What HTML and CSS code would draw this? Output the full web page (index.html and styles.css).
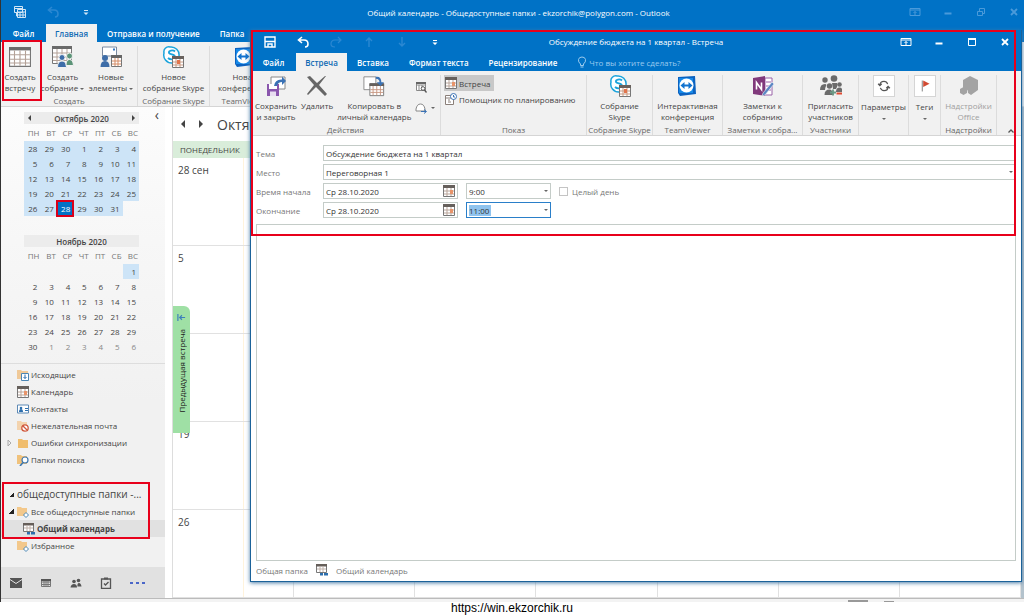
FILE: index.html
```html
<!DOCTYPE html>
<html lang="ru">
<head>
<meta charset="utf-8">
<title>Общий календарь - Outlook</title>
<link rel="stylesheet" href="styles.css">
</head>
<body>
<svg class="sprite" aria-hidden="true">
  <symbol id="i-cal" viewBox="0 0 20 18"><path d="M.5.5h19v17H.5z" fill="#fff" stroke="#777"/><path d="M0 0h20v3H0z" fill="#6a6a6a"/><path d="M1 7h18M1 11h18M1 14.500h18M5 3v14M10 3v14M15 3v14" stroke="#b3a197" fill="none"/></symbol>
  <symbol id="i-minical" viewBox="0 0 12 12"><path d="M.5.5h11v11H.5z" fill="#fff" stroke="#777"/><path d="M0 0h12v3H0z" fill="#66605c"/><path d="M1 6h10M1 9h10M4 3v8M8 3v8" stroke="#b9a59a" fill="none"/><path d="M7 5h3v4H7z" fill="#e8946a"/></symbol>
  <symbol id="i-meet" viewBox="0 0 22 22"><use href="#i-cal" width="20" height="18"/><g stroke="#f1f1f1"><circle cx="10" cy="11.500" r="3" fill="#3e6da8"/><path d="M5.500 21.500q0-6.500 4.500-6.500t4.500 6.500z" fill="#3e6da8"/><circle cx="17.500" cy="10" r="3" fill="#5c9478"/><path d="M14 19.500q0-6 3.500-6t4 6z" fill="#5c9478"/></g></symbol>
  <symbol id="i-items" viewBox="0 0 22 22"><path d="M2.500 1h14v9h-14z" fill="#fff" stroke="#7a8aa0"/><path d="M13 2.500h2v2h-2z" fill="#3579c4"/><circle cx="5" cy="12" r="3" fill="#3e6da8"/><path d="M.5 21q0-6 4.500-6t4.500 6z" fill="#3e6da8"/><path d="M11.500 9.500h10v11h-10z" fill="#fff" stroke="#777"/><path d="M11 9h11v3H11z" fill="#666"/><path d="M12 15h9M12 18h9M15 12v8M18 12v8" stroke="#d58b65"/></symbol>
  <symbol id="i-skype" viewBox="0 0 22 22"><path d="M2 7a5 5 0 0 1 6-6 8 8 0 0 1 9 9 5 5 0 0 1-7 7A8 8 0 0 1 2 7z" fill="#fff" stroke="#1ba4dc" stroke-width="1.500"/><path d="M13 5.500c-2-2-7-1-6 1.500 1 2 6 1 6 4s-5 3-7 1" fill="none" stroke="#1ba4dc" stroke-width="1.800"/><path d="M10.500 10.500h11v11h-11z" fill="#fff" stroke="#777"/><path d="M10 10h12v3H10z" fill="#68615d"/><path d="M11 16h10M11 19h10M14 13v8M18 13v8" stroke="#c99b84"/><path d="M15 14h3v4h-3z" fill="#e2754c"/></symbol>
  <symbol id="i-tv" viewBox="0 0 20 22"><path d="M1 2l17-1 1 18-16 2-2-3z" fill="#0b62c0"/><path d="M2 3h14v15H2z" fill="#1689e8"/><circle cx="9.500" cy="10.500" r="7" fill="#fff"/><path d="M3.500 10.500L7.500 7v2.500h4V7l4 3.500-4 3.500v-2.500h-4V14z" fill="#1273cf"/></symbol>
  <symbol id="i-save" viewBox="0 0 12 12"><path d="M1 1h10v10H1z" fill="none" stroke="currentColor" stroke-width="1.400"/><path d="M1 5.500h10M4 11V8h4v3" fill="none" stroke="currentColor" stroke-width="1.400"/></symbol>
  <symbol id="i-undo" viewBox="0 0 12 12"><path d="M5 1L1.500 4 5 7M2 4h5q4 0 4 4 0 3-3 3" fill="none" stroke="currentColor" stroke-width="1.600"/></symbol>
  <symbol id="i-redo" viewBox="0 0 12 12"><path d="M8 1l3 3-3 3M11 4H5q-4 0-4 4 0 3 4 3" fill="none" stroke="currentColor" stroke-width="1.200"/></symbol>
  <symbol id="i-up" viewBox="0 0 12 12"><path d="M6 11V2M3 5l3-3 3 3" fill="none" stroke="currentColor" stroke-width="1.400"/></symbol>
  <symbol id="i-down" viewBox="0 0 12 12"><path d="M6 1v9M3 7l3 3 3-3" fill="none" stroke="currentColor" stroke-width="1.400"/></symbol>
  <symbol id="i-more" viewBox="0 0 12 12"><path d="M4 4h4v1H4zM3.500 6.500h5L6 9z" fill="currentColor"/></symbol>
  <symbol id="i-outlook" viewBox="0 0 12 12"><path d="M.5.5h8v6h-8zM3.500 3.500h8v8h-8zM.5 2.500h8M3.500 6h8M6 6v5M9 6v5M4 9h7M2.500 7v3h1" fill="none" stroke="currentColor"/></symbol>
  <symbol id="i-ribbon" viewBox="0 0 12 12"><path d="M1 2.500h10v7H1zM1 4h10M6 9V5.500M4.500 7L6 5.500 7.500 7" fill="none" stroke="currentColor"/></symbol>
  <symbol id="i-min" viewBox="0 0 12 12"><path d="M2.500 7.500h7" stroke="currentColor" stroke-width="2"/></symbol>
  <symbol id="i-max" viewBox="0 0 12 12"><path d="M2.500 3v6.500h7V3z" fill="none" stroke="currentColor"/><path d="M2 2h8v2H2z" fill="currentColor"/></symbol>
  <symbol id="i-rest" viewBox="0 0 12 12"><path d="M2.500 5.500h5v4h-5zM4.500 5V2.500h5v5H8" fill="none" stroke="currentColor"/></symbol>
  <symbol id="i-x" viewBox="0 0 12 12"><path d="M3 3l6 6M9 3l-6 6" stroke="currentColor" stroke-width="1.800"/></symbol>
  <symbol id="i-folder" viewBox="0 0 12 12"><path d="M1 2h4l1 1h5v8H1z" fill="#f0bd6c"/></symbol>
  <symbol id="i-shared" viewBox="0 0 12 12"><path d="M0 1h4l1 1h5v8H0z" fill="#f3c88b"/><path d="M9 6.500L11.500 9 9 11.500 6.500 9z" fill="#fff" stroke="#4b86b4"/></symbol>
  <symbol id="i-shcal" viewBox="0 0 12 12"><path d="M.5.500h10v8H.5z" fill="#fff" stroke="#777"/><path d="M0 0h11v2.500H0z" fill="#665f5a"/><path d="M1 5h9M4 2v6M7 2v6" stroke="#c0b2aa"/><path d="M4 9h3v2.500H4zM8 9h4v2.500H8z" fill="#2c6fae"/></symbol>
  <symbol id="i-people" viewBox="0 0 12 12"><circle cx="4" cy="4.500" r="1.800" fill="currentColor"/><circle cx="8.500" cy="3.500" r="1.800" fill="currentColor"/><path d="M.5 10.500Q1 7 4 7t3 3.500zM7.500 9.500Q7 6 9 6t2.500 3.500z" fill="currentColor"/></symbol>
</svg>

<main class="app">
  <header class="bar">
    <div class="title">
      <div class="quick dim">
        <button aria-label="Outlook" class="lit"><svg><use href="#i-outlook"/></svg></button>
        <button aria-label="Отменить" class="faint"><svg><use href="#i-undo"/></svg></button>
        <button aria-label="Ещё" class="lit"><svg><use href="#i-more"/></svg></button>
      </div>
      <h1>Общий календарь - Общедоступные папки - ekzorchik@polygon.com - Outlook</h1>
      <div class="winbtns dim">
        <button aria-label="Лента"><svg><use href="#i-ribbon"/></svg></button>
        <button aria-label="Свернуть"><svg><use href="#i-min"/></svg></button>
        <button aria-label="Восстановить"><svg><use href="#i-rest"/></svg></button>
        <button aria-label="Закрыть"><svg><use href="#i-x"/></svg></button>
      </div>
    </div>
    <nav class="tabs"><button>Файл</button><button class="on">Главная</button><button>Отправка и получение</button><button>Папка</button></nav>
  </header>

  <section class="ribbon main-ribbon">
    <div class="group g-create">
      <div class="btns">
        <button class="big"><svg class="ic"><use href="#i-cal"/></svg>Создать<br>встречу</button>
        <button class="big"><svg class="ic"><use href="#i-meet"/></svg>Создать<br>собрание <i class="dd"></i></button>
        <button class="big"><svg class="ic"><use href="#i-items"/></svg>Новые<br>элементы <i class="dd"></i></button>
      </div>
      <p>Создать</p>
    </div>
    <div class="group g-skype"><div class="btns"><button class="big"><svg class="ic"><use href="#i-skype"/></svg>Новое<br>собрание Skype</button></div><p>Собрание Skype</p></div>
    <div class="group g-tv"><div class="btns"><button class="big"><svg class="ic"><use href="#i-tv"/></svg>Новая<br>конференция</button></div><p>TeamViewer</p></div>
  </section>

  <div class="work">
    <aside class="side">
      <button class="fold" aria-label="Свернуть панель">‹</button>
      <section class="cals">
        <table class="mini">
          <caption><span class="capt"><i class="tri l"></i>Октябрь 2020<i class="tri r"></i></span></caption>
          <thead><tr><th>ПН<th>ВТ<th>СР<th>ЧТ<th>ПТ<th>СБ<th>ВС</tr></thead>
          <tbody class="sel">
          <tr><td>28<td>29<td>30<td>1<td>2<td>3<td>4</tr>
          <tr><td>5<td>6<td>7<td>8<td>9<td>10<td>11</tr>
          <tr><td>12<td>13<td>14<td>15<td>16<td>17<td>18</tr>
          <tr><td>19<td>20<td>21<td>22<td>23<td>24<td>25</tr>
          <tr><td>26<td>27<td class="today">28<td>29<td>30<td>31<td class="none"></tr>
          </tbody>
        </table>
        <table class="mini">
          <caption><span class="capt mid">Ноябрь 2020</span></caption>
          <thead><tr><th>ПН<th>ВТ<th>СР<th>ЧТ<th>ПТ<th>СБ<th>ВС</tr></thead>
          <tbody>
          <tr><td><td><td><td><td><td><td class="hit">1</tr>
          <tr><td>2<td>3<td>4<td>5<td>6<td>7<td>8</tr>
          <tr><td>9<td>10<td>11<td>12<td>13<td>14<td>15</tr>
          <tr><td>16<td>17<td>18<td>19<td>20<td>21<td>22</tr>
          <tr><td>23<td>24<td>25<td>26<td>27<td>28<td>29</tr>
          <tr><td>30<td class="out">1<td class="out">2<td class="out">3<td class="out">4<td class="out">5<td class="out">6</tr>
          </tbody>
        </table>
      </section>
      <nav class="folders">
        <a href="#"><i class="tw"></i><svg viewBox="0 0 12 12"><path d="M0 1h4l1 1h6v8H0z" fill="#f0c998"/><path d="M4.500 4.500h7v7h-7z" fill="#fff" stroke="#4b86b4"/><path d="M8 5.500v4M6.500 8L8 9.500 9.500 8" stroke="#2c6fae" fill="none"/></svg>Исходящие</a>
        <a href="#"><i class="tw"></i><svg><use href="#i-minical"/></svg>Календарь</a>
        <a href="#"><i class="tw"></i><svg viewBox="0 0 12 12"><path d="M.5 2h11v8H.5z" fill="#fff" stroke="#5c89b5"/><circle cx="4" cy="5" r="1.300" fill="#2c6fae"/><path d="M2 9q0-3 2-3t2 3zM8 5h3v1H8zM8 7h3v1H8z" fill="#2c6fae"/></svg>Контакты</a>
        <a href="#"><i class="tw"></i><svg viewBox="0 0 12 12"><path d="M0 1h4l1 1h5v8H0z" fill="#f3d3ae"/><circle cx="8" cy="8" r="3.200" fill="#fff" stroke="#d0583c" stroke-width="1.300"/><path d="M6 6l4 4" stroke="#d0583c" stroke-width="1.300"/></svg>Нежелательная почта</a>
        <a href="#"><i class="tw"><svg viewBox="0 0 6 8"><path d="M1 1l3 3-3 3z" fill="none" stroke="#aaa"/></svg></i><svg><use href="#i-folder"/></svg>Ошибки синхронизации</a>
        <a href="#"><i class="tw"></i><svg viewBox="0 0 12 12"><path d="M0 1h4l1 1h5v8H0z" fill="#f0c27c"/><circle cx="8" cy="6" r="3" fill="#fff" stroke="#3d77b0" stroke-width="1.200"/><path d="M6 8.500L3 12" stroke="#3d77b0" stroke-width="1.600"/></svg>Папки поиска</a>
      </nav>
      <nav class="folders shared">
        <a href="#" class="root"><i class="tw open"></i>общедоступные папки -...</a>
        <a href="#"><i class="tw open"></i><svg><use href="#i-shared"/></svg>Все общедоступные папки</a>
        <a href="#" class="cur"><i class="tw"></i><svg><use href="#i-shcal"/></svg>Общий календарь</a>
        <a href="#"><i class="tw"></i><svg><use href="#i-shared"/></svg>Избранное</a>
      </nav>
      <nav class="modules">
        <button aria-label="Почта"><svg viewBox="0 0 12 12"><path d="M0 1h12v10H0z" fill="#555"/><path d="M0 2.500l6 4 6-4" fill="none" stroke="#e1e1e1"/></svg></button>
        <button aria-label="Календарь"><svg viewBox="0 0 12 12"><path d="M1.500 2.500h9v7h-9zM1 5h10M1 7.500h10M4 3v7M6 3v7M8 3v7" fill="none" stroke="#777"/><path d="M1 2h10v2H1z" fill="#555"/></svg></button>
        <button aria-label="Люди"><svg><use href="#i-people"/></svg></button>
        <button aria-label="Задачи"><svg viewBox="0 0 12 12"><path d="M1.500 2h9v9.500h-9z" fill="none" stroke="#555" stroke-width="1.300"/><path d="M4 .5h4v2H4z" fill="#555"/><path d="M4 6.500L5.500 8 8.500 5" fill="none" stroke="#555" stroke-width="1.400"/></svg></button>
        <button aria-label="Ещё" class="dots"><svg viewBox="0 0 16 12"><path d="M0 5h3v2H0zM6 5h3v2H6zM12 5h3v2h-3z" fill="#4a66c8"/></svg></button>
      </nav>
    </aside>

    <section class="month">
      <div class="mhead"><i class="tri l"></i><i class="tri r"></i><h2>Октябрь 2020</h2></div>
      <div class="dayhead">ПОНЕДЕЛЬНИК</div>
      <div class="grid">
        <div class="wk"><div>28 сен</div><div></div><div></div><div></div><div></div><div></div><div></div></div>
        <div class="wk"><div>5</div><div></div><div></div><div></div><div></div><div></div><div></div></div>
        <div class="wk"><div></div><div></div><div></div><div></div><div></div><div></div><div></div></div>
        <div class="wk"><div>19</div><div></div><div></div><div></div><div></div><div></div><div></div></div>
        <div class="wk"><div>26</div><div></div><div></div><div></div><div></div><div></div><div></div></div>
      </div>
      <button class="prev"><svg viewBox="0 0 10 10"><path d="M1 1v8M9 5H3M5.500 2.500L3 5l2.500 2.500" fill="none" stroke="#3d7fbb" stroke-width="1.300"/></svg><span>Предыдущая встреча</span></button>
    </section>
  </div>
  <div class="status"><i class="seg"></i><i class="seg dash"></i></div>

  <div class="mark m-create"></div>
  <div class="mark m-folders"></div>
</main>

<section class="dialog" role="dialog" aria-label="Встреча">
  <header class="bar">
    <div class="title">
      <div class="quick">
        <button aria-label="Сохранить"><svg><use href="#i-save"/></svg></button>
        <button aria-label="Отменить"><svg><use href="#i-undo"/></svg></button>
        <button aria-label="Повторить" class="faint"><svg><use href="#i-redo"/></svg></button>
        <button aria-label="Назад" class="faint"><svg><use href="#i-up"/></svg></button>
        <button aria-label="Вперёд" class="faint"><svg><use href="#i-down"/></svg></button>
        <button aria-label="Ещё"><svg><use href="#i-more"/></svg></button>
      </div>
      <h1>Обсуждение бюджета на 1 квартал - Встреча</h1>
      <div class="winbtns">
        <button aria-label="Лента"><svg><use href="#i-ribbon"/></svg></button>
        <button aria-label="Свернуть"><svg><use href="#i-min"/></svg></button>
        <button aria-label="Развернуть"><svg><use href="#i-max"/></svg></button>
        <button aria-label="Закрыть"><svg><use href="#i-x"/></svg></button>
      </div>
    </div>
    <nav class="tabs"><button>Файл</button><button class="on">Встреча</button><button>Вставка</button><button>Формат текста</button><button>Рецензирование</button><button class="tell"><svg viewBox="0 0 10 12"><path d="M3.500 8Q1 6 1.500 3.500 2 1 5 1t3.500 2.500Q9 6 6.500 8v1.500h-3zM3.500 11h3" fill="none" stroke="currentColor"/></svg>Что вы хотите сделать?</button></nav>
  </header>

  <section class="ribbon">
    <div class="group g-act">
      <div class="btns">
        <button class="big"><svg class="ic" viewBox="0 0 22 22"><path d="M6 2h14v12H6z" fill="#fff" stroke="#888"/><path d="M2 9h12v12H2z" fill="#8a56ad"/><path d="M4 9h8v5H4z" fill="#fff"/><path d="M5 16.500h6V21H5z" fill="#e8ddf0"/><path d="M9 11q1-7 8-6.500V1.500L21 6l-4 4V7q-4 0-5 4z" fill="#3a72b5"/></svg>Сохранить<br>и закрыть</button>
        <button class="big"><svg class="ic" viewBox="0 0 22 22"><path d="M1 2l3-1 7 7 8-7h1l-7 9 8 9-2 2-9-9-8 8-1-1 7-9z" fill="#666"/></svg>Удалить</button>
        <button class="big"><svg class="ic" viewBox="0 0 24 22"><path d="M1 1h13v14H1z" fill="#fff" stroke="#888"/><path d="M7.500 8.500h15v13h-15z" fill="#fff" stroke="#777"/><path d="M7 8h16v3H7z" fill="#66605c"/><path d="M8 15h14M8 18h14M11 11v10M15 11v10M19 11v10" stroke="#c79680"/><path d="M14 1q6-1 6 6h3l-4 4-4-4h3q0-4-4-4z" fill="#3a72b5"/></svg>Копировать в<br>личный календарь</button>
        <div class="smalls">
          <button aria-label="Просмотр"><svg viewBox="0 0 12 12"><path d="M1.500 1.500h9v8h-9zM1 4h10M4 4v5M7 4v5" fill="#fff" stroke="#888"/><path d="M1 1h10v2H1z" fill="#666"/><circle cx="8" cy="7.500" r="1.800" fill="#fff" stroke="#555"/><path d="M9.500 9l2 2.500" stroke="#555" stroke-width="1.300"/></svg></button>
          <button aria-label="Переслать"><svg viewBox="0 0 12 12"><path d="M1 7Q2 2 5.500 2T10 7v2H1z" fill="#fff" stroke="#888"/><path d="M6 9.500h5M9 7.500l2.500 2L9 11.500" fill="none" stroke="#3a72b5"/></svg><i class="dd"></i></button>
        </div>
      </div><p>Действия</p>
    </div>
    <div class="group g-show"><div class="rows">
      <button class="row pressed"><svg viewBox="0 0 12 12"><use href="#i-minical"/></svg>Встреча</button>
      <button class="row"><svg viewBox="0 0 12 12"><path d="M.5 2.500h8v9h-8zM1 5h7M3 7h2M3 9h3" fill="#fff" stroke="#8a7f79"/><circle cx="8.500" cy="3.500" r="3" fill="#fff" stroke="#3a72b5"/><path d="M8.500 2v2h1.500" fill="none" stroke="#3a72b5"/></svg>Помощник по планированию</button>
    </div><p>Показ</p></div>
    <div class="group g66"><div class="btns"><button class="big"><svg class="ic"><use href="#i-skype"/></svg>Собрание<br>Skype</button></div><p>Собрание Skype</p></div>
    <div class="group g70"><div class="btns"><button class="big"><svg class="ic"><use href="#i-tv"/></svg>Интерактивная<br>конференция</button></div><p>TeamViewer</p></div>
    <div class="group g80"><div class="btns"><button class="big"><svg class="ic" viewBox="0 0 22 22"><path d="M13 3h7v17h-7z" fill="#fff" stroke="#9a62a8"/><path d="M14 7h5M14 11h5M14 15h5" stroke="#9a62a8"/><path d="M1 3l12-2v20L1 19z" fill="#80397b"/><path d="M4.500 14.500v-7l5 7v-7" fill="none" stroke="#fff" stroke-width="1.600"/><path d="M20 7l2 2-9 11-3 1 1-3z" fill="#5a86c4" stroke="#f1f1f1" stroke-width=".6"/></svg>Заметки к<br>собранию</button></div><p>Заметки к собра...</p></div>
    <div class="group g56"><div class="btns"><button class="big"><svg class="ic" viewBox="0 0 22 22"><g fill="#6b6b6b"><circle cx="5" cy="5" r="2.700"/><circle cx="14" cy="3.500" r="3.300"/><circle cx="19.500" cy="9.500" r="2.300"/><circle cx="9.500" cy="11" r="2.700"/><path d="M0 15q0-6 5-6 2 0 1 2-1 2-1 4zM12 8h5q1 3-1 6h-3zM4.500 20q0-5.500 5-5.500 3 0 4 5.500zM16 17q0-4.500 3.500-4.500t2.500 4.500z"/></g><path d="M13 14.500v6M10 17.500h6" stroke="#6b9a86" stroke-width="1.800"/><path d="M16.500 18.500H22" stroke="#e04a31" stroke-width="2"/></svg>Пригласить<br>участников</button></div><p>Участники</p></div>
    <div class="group g56 g-par"><div class="btns"><button class="big"><svg class="ic box" viewBox="0 0 22 22"><path d="M6.500 10q0-4 4.500-4 3 0 4 3M15.500 12q0 4-4.500 4-3 0-4-3M4.500 8.500l2 2 2-2M13.500 13.500l2-2 2 2" fill="none" stroke="#555" stroke-width="1.300"/></svg>Параметры<br><i class="dd"></i></button></div></div>
    <div class="group g-tag"><div class="btns"><button class="big"><svg class="ic box" viewBox="0 0 22 22"><path d="M8 5v12" stroke="#777"/><path d="M9 5l7 3.500L9 12z" fill="#d14a32"/></svg>Теги<br><i class="dd"></i></button></div></div>
    <div class="group g56 off"><div class="btns"><button class="big" disabled><svg class="ic" viewBox="0 0 22 22"><path d="M5 5l7-4 8 4v10l-7 5-3-2q0-5-5-5zM2 14l3.500-2L9 14v4l-3.500 2L2 18z" fill="#a3a3a3"/></svg>Надстройки<br>Office</button></div><p>Надстройки</p></div>
    <button class="collapse" aria-label="Свернуть ленту"><svg viewBox="0 0 8 8"><path d="M1.500 5.500L4 3l2.500 2.500" fill="none" stroke="#555" stroke-width="1.300"/></svg></button>
  </section>

  <form class="form">
    <label for="subj">Тема</label><input id="subj" class="subj" value="Обсуждение бюджета на 1 квартал">
    <label for="place">Место</label><span class="field"><input id="place" value="Переговорная 1"><i class="dd"></i></span>
    <label for="d1">Время начала</label>
    <div class="line"><span class="field date"><input id="d1" value="Ср 28.10.2020"><svg><use href="#i-minical"/></svg></span><span class="field time"><input aria-label="Время начала" value="9:00"><i class="dd"></i></span><input type="checkbox" id="all"><label for="all">Целый день</label></div>
    <label for="d2">Окончание</label>
    <div class="line"><span class="field date"><input id="d2" value="Ср 28.10.2020"><svg><use href="#i-minical"/></svg></span><span class="field time active"><input class="picked" aria-label="Время окончания" value="11:00"><i class="dd"></i></span></div>
  </form>
  <textarea class="body" aria-label="Текст встречи"></textarea>
  <footer class="dfoot"><span>Общая папка</span><svg><use href="#i-shcal"/></svg><span>Общий календарь</span></footer>
  <div class="mark m-top"></div>
</section>

<footer class="credit">https://win.ekzorchik.ru</footer>
</body>
</html>
```
FILE: styles.css
```css
* { box-sizing: border-box; }
body { margin: 0; height: 100vh; display: flex; flex-direction: column; position: relative; overflow: hidden; background: #fff; color: #444; font: 8px/11px "Open Sans", "Noto Sans", sans-serif; }
button, input, textarea { font: inherit; color: inherit; margin: 0; padding: 0; border: 0; background: none; }
h1, h2, p { margin: 0; font-weight: 400; }
a { color: inherit; text-decoration: none; }
svg { width: 12px; height: 12px; flex: none; display: block; }
.sprite { position: absolute; width: 0; height: 0; }

.app { flex: 1; min-height: 0; display: flex; flex-direction: column; position: relative; border-left: 1px solid #333; }
.bar { background: #0072c6; color: #fff; }
.title { display: flex; align-items: center; height: 24px; }
.title h1 { flex: 1; text-align: center; font-size: 8px; white-space: nowrap; }
.quick, .winbtns { display: flex; align-items: center; flex: none; }
.quick { width: 127px; padding-left: 13px; gap: 21px; }
.winbtns { gap: 21px; padding-right: 4px; }
.dim { color: #4a9ada; }
.lit { color: #d2e6f6; }
.faint { color: #2b88d2; }
.tabs { display: flex; height: 18px; }
.tabs button { padding: 0 10px; white-space: nowrap; font-weight: 600; }
.tabs button:first-child { width: 45px; }
.tabs .on { width: 51px; padding: 0; background: #f1f1f1; color: #0f6ab4; }

.ribbon { display: flex; background: #f1f1f1; height: 65px; border-bottom: 1px solid #d5d5d5; padding-top: 4px; flex: none; }
.group { flex: none; display: flex; flex-direction: column; justify-content: space-between; border-right: 1px solid #dcdcdc; text-align: center; white-space: nowrap; }
.group p { color: #666; overflow: hidden; }
.btns { display: flex; justify-content: center; align-items: flex-start; }
.big { white-space: nowrap; }
.ic { width: 22px; height: 22px; margin: 0 auto 3px; }
.box { background: #fff; border: 1px solid #d5d5d5; margin-bottom: 4px; }
.dd { display: inline-block; border: 2px solid transparent; border-top-color: #666; border-bottom: 0; vertical-align: middle; }
.g-create { width: 137px; }
.g-create .btns { justify-content: flex-start; }
.g-create .big:nth-child(1) { width: 38px; }
.g-create .big:nth-child(2) { width: 47px; }
.g-create .big:nth-child(3) { width: 50px; }
.g-skype { width: 72px; }
.g-tv { width: 70px; }

.work { flex: 1; min-height: 0; display: flex; }
.side { width: 164px; flex: none; display: flex; flex-direction: column; position: relative; background: linear-gradient(#fcfcfc, #f1f1f1 60%); }
.fold { position: absolute; right: 6px; top: 2px; font-size: 14px; }
.cals { display: flex; flex-direction: column; gap: 19px; padding: 5px 26px 9px 23px; border-bottom: 1px solid #ddd; }
.mini { width: 100%; border-collapse: collapse; table-layout: fixed; }
.capt { display: flex; justify-content: space-between; align-items: center; height: 12px; padding: 0 4px; background: #ececec; font-weight: 600; }
.capt.mid { justify-content: center; }
.mini th, .mini td { height: 15px; padding: 0 3px 0 0; text-align: right; line-height: 15px; font-weight: 400; }
.mini th { height: 17px; padding-right: 1px; color: #777; }
.sel td, .mini .hit { background: #cde4f7; }
.mini .none { background: none; }
.mini .today { background: #0072c6; color: #fff; outline: 2px solid #d9001b; outline-offset: -1px; }
.mini .out { color: #888; }
.tri { display: inline-block; border: 3px solid transparent; }
.tri.l { border-right-color: #444; border-left: 0; }
.tri.r { border-left-color: #444; border-right: 0; }
.folders { display: flex; flex-direction: column; padding-top: 2px; }
.folders a { display: flex; align-items: center; height: 17px; padding-left: 6px; gap: 2px; white-space: nowrap; }
.tw { width: 8px; height: 8px; flex: none; }
.tw svg { width: 6px; height: 8px; }
.tw.open { width: 5px; height: 5px; margin: 0 1px 0 2px; background: linear-gradient(135deg, transparent 50%, #222 50%); }
.folders.shared { padding-top: 17px; }
.folders .root { font-size: 10px; height: 18px; }
.folders .cur { font-weight: 700; background: #e1e1e1; padding-left: 12px; }
.modules { margin-top: auto; height: 31px; display: flex; align-items: center; gap: 18px; padding-left: 9px; background: #e1e1e1; color: #555; }
.dots svg { width: 16px; }

.month { flex: 1; min-width: 0; margin-left: 7px; position: relative; display: flex; flex-direction: column; border-left: 1px solid #ddd; border-right: 3px solid #b4c3cd; }
.mhead { display: flex; align-items: center; gap: 14px; height: 34px; padding-left: 8px; }
.mhead .tri { border-width: 4px; }
.mhead h2 { font-size: 14px; }
.dayhead { height: 17px; line-height: 17px; padding-left: 7px; background: linear-gradient(90deg, #d9edda 120px, #e9f5e9 120px); }
.grid { flex: 1; display: flex; flex-direction: column; }
.wk { flex: 1; display: grid; grid-template-columns: repeat(7, 1fr); border-bottom: 1px solid #e1e1e1; }
.wk div { border-right: 1px solid #e1e1e1; padding: 4px 5px; font-size: 10px; line-height: 16px; }
.wk div:first-child { background: linear-gradient(90deg, transparent 70px, #fff3dc 70px, #fff3dc 71px, transparent 71px); }
.prev { position: absolute; left: 0; top: 199px; width: 17px; height: 127px; display: flex; flex-direction: column; align-items: center; gap: 7px; padding-top: 7px; border-radius: 0 6px 0 0; background: #9fe0a5; color: #222; }
.prev svg { width: 9px; height: 9px; }
.prev span { writing-mode: vertical-rl; transform: rotate(180deg); white-space: nowrap; }
.status { height: 4px; background: #f3f3f3; border-top: 1px solid #bbb; display: flex; gap: 16px; justify-content: flex-end; padding-right: 130px; }
.seg { width: 20px; background: #999; margin-top: 1px; }
.seg.dash { width: 10px; margin-top: 2px; }

.mark { position: absolute; border: 2px solid #e8001b; pointer-events: none; }
.m-create { left: 1px; top: 40px; width: 40px; height: 61px; }
.m-folders { left: 1px; top: 482px; width: 148px; height: 57px; }

.dialog { position: absolute; left: 250px; top: 30px; right: 2px; bottom: 33px; display: flex; flex-direction: column; background: #fff; border: 1px solid #1b6299; border-top: 0; box-shadow: 0 1px 4px #4a7ca8; }
.dialog .title { height: 23px; }
.dialog .quick { width: 200px; }
.dialog .winbtns { width: 200px; justify-content: flex-end; padding-right: 10px; }
.tabs .tell { display: flex; align-items: center; gap: 2px; font-weight: 400; color: #9bcbee; }
.tell svg { width: 10px; }
.g-act { width: 190px; }
.g-act .btns { justify-content: flex-start; gap: 4px; padding-left: 4px; }
.smalls { display: flex; flex-direction: column; gap: 9px; padding-top: 6px; }
.smalls button { display: flex; align-items: center; gap: 4px; }
.g-show { width: 146px; }
.rows { display: flex; flex-direction: column; align-items: flex-start; padding-left: 3px; }
.row { display: flex; align-items: center; gap: 2px; height: 16px; padding: 0 4px 0 1px; }
.pressed { background: #c8c8c8; }
.g66 { width: 66px; }
.g70 { width: 70px; }
.g80 { width: 80px; }
.g56 { width: 56px; }
.g-par { width: 50px; }
.g-tag { width: 32px; }
.off { color: #a0a0a0; }
.collapse { margin-left: auto; align-self: flex-end; padding: 0 6px 0 0; }
.collapse svg { width: 8px; height: 8px; }

.form { display: grid; grid-template-columns: 62px 1fr; column-gap: 5px; row-gap: 3px; align-items: center; padding: 9px 5px 6px; }
.form label { color: #777; }
.form input { color: #333; min-width: 0; }
.field, .form .subj { height: 16px; border: 1px solid #c4ccc8; background: #fff; padding: 0 2px; }
.field { display: flex; align-items: center; }
.field input { flex: 1; width: 0; }
.line { display: flex; align-items: center; }
.date { width: 135px; margin-right: 8px; }
.time { width: 85px; margin-right: 8px; }
.time input { flex: none; width: 22px; }
.time .dd { margin-left: auto; }
.active { border-color: #2a7fc9; }
.form .picked { background: #8fc3ee; }
.line input[type=checkbox] { appearance: none; width: 9px; height: 9px; border: 1px solid #c4c4c4; margin-right: 4px; }
.body { flex: 1; margin: 0 5px; border: 1px solid #c4ccc8; resize: none; outline: 0; }
.dfoot { display: flex; align-items: center; gap: 8px; height: 20px; padding: 0 5px 2px; color: #777; }
.m-top { left: 0; top: 0; right: 5px; height: 206px; }

.credit { height: 13px; text-align: center; color: #000; font: 12px/12px "Liberation Sans", sans-serif; }
```
